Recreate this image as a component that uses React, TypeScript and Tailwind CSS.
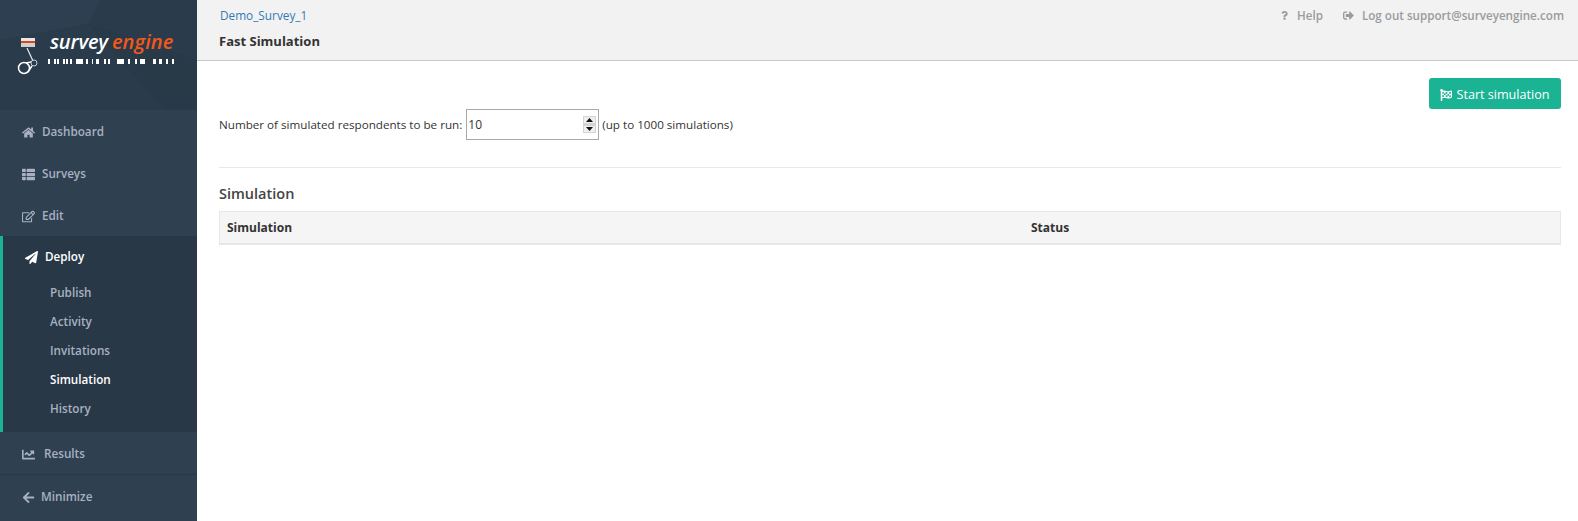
import { FaHome, FaThList, FaRegEdit, FaPaperPlane, FaChartLine, FaArrowLeft, FaQuestion, FaSignOutAlt, FaFlagCheckered } from "react-icons/fa"
import type { ReactNode } from "react"

// [x, width] of the logo's barcode, in px from the left of the svg
const barcode = [
  [0, 2], [6, 2], [9, 2], [15, 2], [18, 2], [22, 2], [28, 7], [38, 2], [44, 1], [48, 3], [56, 2], [60, 2], [69, 7], [80, 2],
  [87, 2], [92, 5], [105, 3], [111, 3], [118, 2], [124, 2],
]

function Logo() {
  return (
    <div className="relative h-[110px] shrink-0 overflow-hidden bg-[#2a3b4b]">
      {/* faint facets behind the logo */}
      <svg className="absolute inset-0" width="197" height="110" viewBox="0 0 197 110">
        <polygon points="0,0 100,0 88,24 0,40" fill="#2d3f50" />
        <polygon points="88,24 197,60 197,110 165,110" fill="#283948" />
      </svg>
      {/* piston */}
      <svg className="absolute left-[16px] top-[36px]" width="28" height="40" viewBox="0 0 28 40" fill="none">
        <rect x="5" y="2" width="14" height="3" fill="#e8e8e8" />
        <rect x="5" y="5" width="14" height="2" fill="#d9481c" />
        <rect x="5" y="7" width="14" height="4" fill="#d0d0d0" />
        <path d="M11 12 L17 25" stroke="#e8e8e8" strokeWidth="1.2" />
        <path d="M10 27 L15 26 M12 36 L16 30" stroke="#fff" strokeWidth="1.4" />
        <circle cx="8" cy="32" r="5.5" stroke="#fff" strokeWidth="1.5" />
        <circle cx="18" cy="27" r="3" stroke="#ccd" strokeWidth="1" />
      </svg>
      <div className="absolute left-[50px] top-[28px] flex gap-[4px] text-[20px] font-semibold italic leading-7">
        <span className="tracking-[-0.2px] text-white">survey</span>
        <span className="tracking-[0.1px] text-[#f2581b]">engine</span>
      </div>
      <svg className="absolute left-[48px] top-[59px]" width="128" height="5" viewBox="0 0 128 5">
        {barcode.map(([x, w]) => (
          <rect key={x} x={x} y="0" width={w} height="5" fill="#fff" />
        ))}
      </svg>
    </div>
  )
}

function NavItem({ icon, label, gap = "gap-[7px]" }: { icon: ReactNode; label: string; gap?: string }) {
  return (
    <div className={`flex h-[42px] items-center pl-[22px] pt-[2px] font-semibold text-[#a7b1c2] ${gap}`}>
      <span className="flex w-[13px] justify-center text-[13px]">{icon}</span>
      <span>{label}</span>
    </div>
  )
}

function Sidebar() {
  return (
    <aside className="flex w-[197px] shrink-0 flex-col bg-[#2f4050] text-[11.7px]">
      <Logo />
      <NavItem icon={<FaHome />} label="Dashboard" />
      <NavItem icon={<FaThList />} label="Surveys" />
      <NavItem icon={<FaRegEdit />} label="Edit" />
      <div className="h-[196px] border-l-[3px] border-[#1ab394] bg-[#293846]">
        <div className="flex h-[42px] items-center gap-[7px] pl-[22px] font-semibold text-white">
          <FaPaperPlane className="text-[13px]" />
          <span>Deploy</span>
        </div>
        {["Publish", "Activity", "Invitations", "Simulation", "History"].map((s) => (
          <div key={s} className={`flex h-[29px] items-center pl-[47px] pt-px font-semibold ${s === "Simulation" ? "text-white" : "text-[#a7b1c2]"}`}>
            {s}
          </div>
        ))}
      </div>
      <div className="border-b border-[#293846]">
        <NavItem icon={<FaChartLine />} label="Results" gap="gap-[9px]" />
      </div>
      <NavItem icon={<FaArrowLeft />} label="Minimize" gap="gap-[6px]" />
    </aside>
  )
}

export default function App() {
  return (
    <div className="flex h-[521px] w-[1578px] overflow-hidden bg-white font-['Open_Sans',sans-serif] text-[11.65px] text-[#333]">
      <Sidebar />
      <main className="flex min-w-0 flex-1 flex-col">
        {/* Top bar */}
        <header className="h-[61px] border-b border-[#c8c8c8] bg-[#f2f2f2] pl-[23px] pr-[14px]">
          <div className="flex h-[32px] items-center justify-between">
            <a className="text-[11.8px] text-[#337ab7]">Demo_Survey_1</a>
            <div className="flex items-center gap-5 font-semibold text-[#999c9e]">
              <span className="flex items-center gap-2">
                <FaQuestion className="text-[9px]" /> Help
              </span>
              <span className="flex items-center gap-2">
                <FaSignOutAlt className="text-[11px]" /> Log out support@surveyengine.com
              </span>
            </div>
          </div>
          <div className="-ml-px text-[13px] font-bold leading-[18px]">Fast Simulation</div>
        </header>

        {/* Content */}
        <div className="pl-[22px] pr-[17px]">
          <div className="relative h-[107px] border-b border-[#e7eaec]">
            <button className="absolute right-0 top-[17px] flex h-[31px] w-[132px] items-center justify-center gap-1 rounded-[3px] bg-[#1ab394] pt-[3px] text-[12.6px] text-white">
              <FaFlagCheckered className="text-[12px]" /> Start simulation
            </button>
            <div className="flex items-center gap-[3px] pt-[48px]">
              <span className="mr-px">Number of simulated respondents to be run:</span>
              <div className="flex h-[31px] w-[133px] items-center justify-between border border-[#a9a9a9] pl-px pr-[2px] text-[#333]">
                <span className="text-[12px]">10</span>
                <svg width="13" height="17" viewBox="0 0 13 17">
                  <rect width="13" height="17" fill="#d4d4d4" />
                  <rect x="1" y="1" width="11" height="6" fill="#efefef" />
                  <rect x="1" y="10" width="11" height="6" fill="#efefef" />
                  <path d="M6.5 2 L10 6 H3 Z" fill="#111" />
                  <path d="M6.5 15 L10 11 H3 Z" fill="#111" />
                </svg>
              </div>
              <span>(up to 1000 simulations)</span>
            </div>
          </div>

          <h2 className="mt-[15px] text-[14.5px] font-semibold leading-[22px] text-[#444]">Simulation</h2>
          <div className="mt-[6px] grid h-[34px] grid-cols-[804px_1fr] items-center border border-b-2 border-[#e7e7e7] bg-[#f5f5f5] px-[7px] text-[12px] font-bold">
            <span>Simulation</span>
            <span>Status</span>
          </div>
        </div>
      </main>
    </div>
  )
}
